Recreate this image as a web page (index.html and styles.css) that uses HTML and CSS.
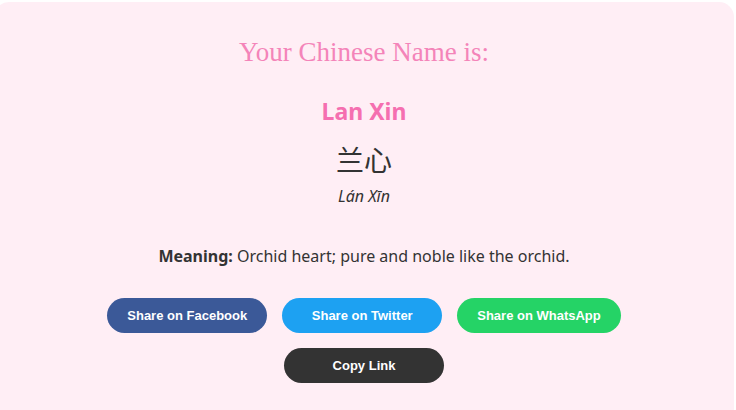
FILE: index.html
```html
<!DOCTYPE html>
<html lang="en">
<head>
    <meta charset="UTF-8">
    <meta name="viewport" content="width=device-width, initial-scale=1.0">
    <title>Your Chinese Name</title>
    <link rel="stylesheet" href="styles.css">
</head>
<body>
    <div class="result-card">
        <h2 class="result-title">Your Chinese Name is:</h2>

        <div class="name-block">
            <h3 class="name-english">Lan Xin</h3>
            <div class="name-chinese">兰心</div>
            <div class="name-pinyin">Lán Xīn</div>
        </div>

        <p class="name-meaning"><strong>Meaning:</strong> Orchid heart; pure and noble like the orchid.</p>

        <div class="share-row">
            <button class="share-btn btn-facebook">Share on Facebook</button>
            <button class="share-btn btn-twitter">Share on Twitter</button>
            <button class="share-btn btn-whatsapp">Share on WhatsApp</button>
        </div>
        <div class="share-row">
            <button class="share-btn btn-copy">Copy Link</button>
        </div>
    </div>
</body>
</html>
```

FILE: styles.css
```css
:root {
    --pink: #f56fb0;
    --card: #ffeef5;
    --text: #333;
}

* {
    margin: 0;
    padding: 0;
    box-sizing: border-box;
}

body {
    background: #fff;
    font-family: 'Noto Sans', 'Noto Sans CJK SC', sans-serif;
    color: var(--text);
    overflow: hidden;
}

.result-card {
    width: 740px;
    margin: 2px 0 0 -6px;
    min-height: 440px;
    background: var(--card);
    border-radius: 15px;
    padding: 34px 20px 0;
    text-align: center;
}

.result-title {
    font-family: 'Liberation Serif', serif;
    font-weight: 300;
    font-size: 27px;
    color: #f484b9;
    line-height: 32px;
}

.name-block {
    margin-top: 28px;
}

.name-english {
    font-size: 23px;
    font-weight: 700;
    color: var(--pink);
    line-height: 30px;
}

.name-chinese {
    font-family: 'Noto Sans CJK SC', sans-serif;
    font-size: 28px;
    line-height: 40px;
    margin-top: 13px;
}

.name-pinyin {
    font-style: italic;
    font-size: 16px;
    line-height: 24px;
    margin-top: 5px;
}

.name-meaning {
    font-size: 16px;
    line-height: 24px;
    margin-top: 36px;
}

.share-row {
    display: flex;
    justify-content: center;
    gap: 15px;
}

.name-meaning + .share-row {
    margin-top: 30px;
}

.share-row + .share-row {
    margin-top: 15px;
}

.share-btn {
    min-width: 160px;
    height: 35px;
    padding: 0 20px;
    border: none;
    border-radius: 20px;
    font-family: 'Liberation Sans', Arial, sans-serif;
    font-size: 13px;
    font-weight: 700;
    color: #fff;
    cursor: pointer;
}

.btn-facebook { background: #3b5998; }
.btn-twitter { background: #1da1f2; }
.btn-whatsapp { background: #25d366; }
.btn-copy { background: #333; }
```
